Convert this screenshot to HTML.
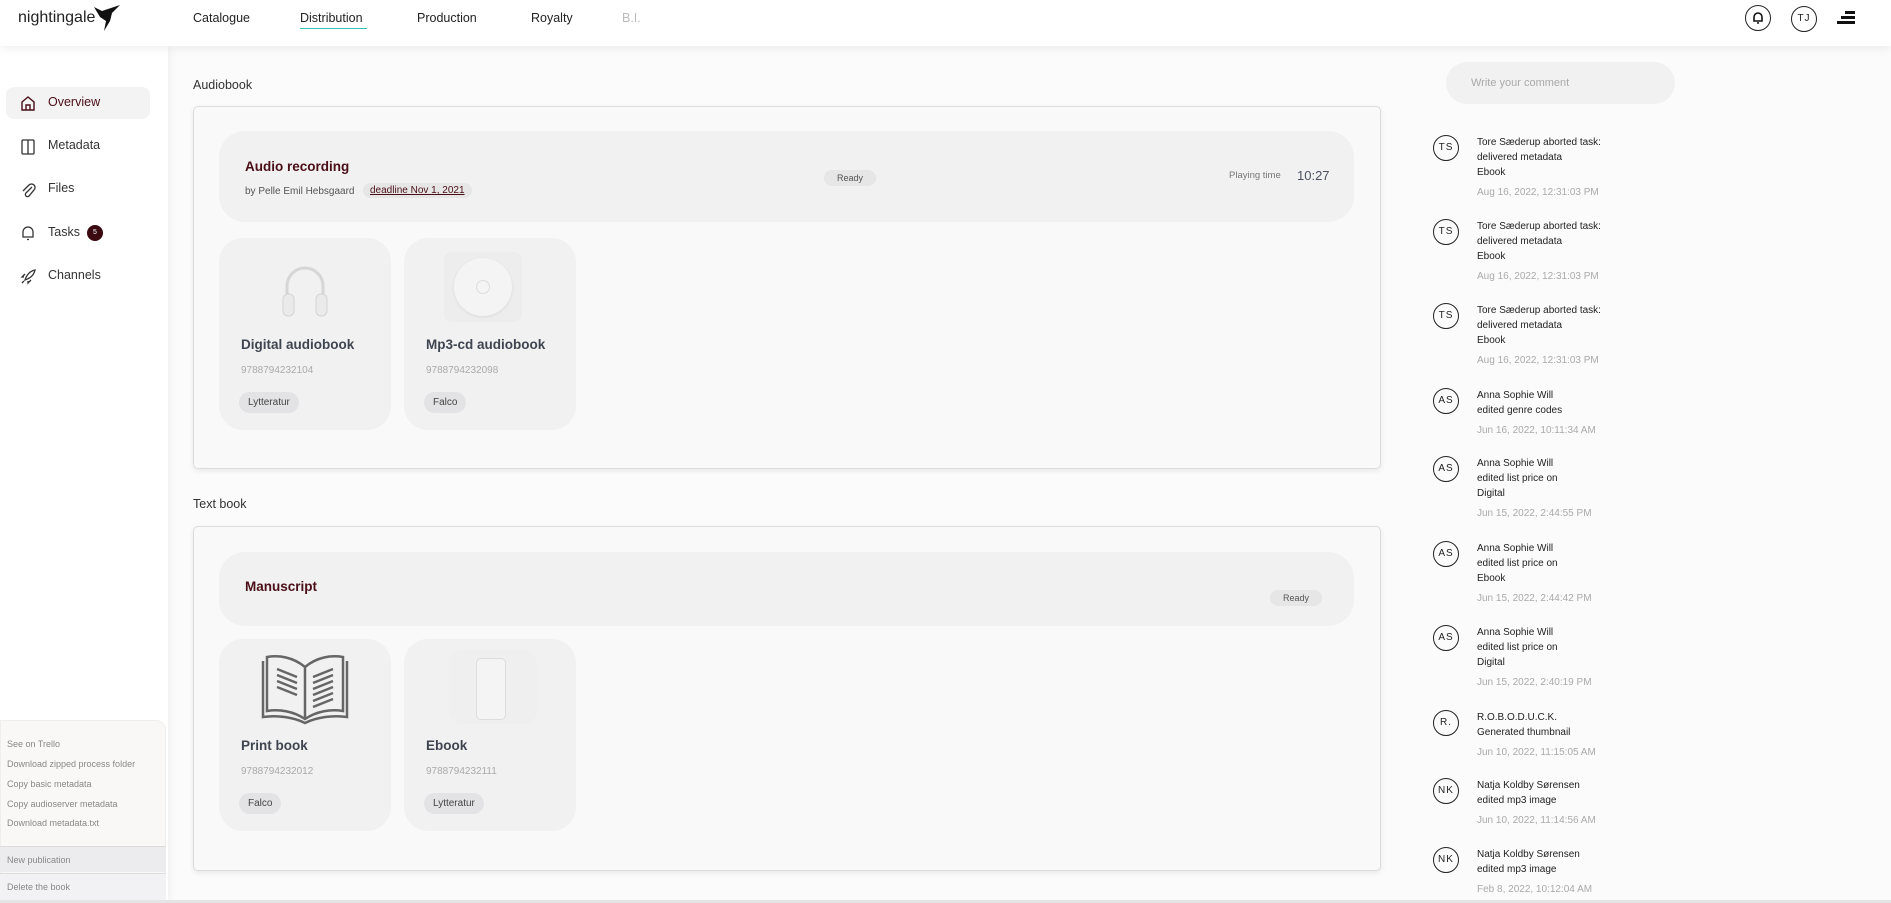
<!DOCTYPE html>
<html><head><meta charset="utf-8"><style>
*{box-sizing:border-box;margin:0;padding:0}
body{width:1891px;height:903px;position:relative;overflow:hidden;background:#fbfbfb;font-family:"Liberation Sans",sans-serif;color:#222}
.a{position:absolute}
.hdr{left:0;top:0;width:1891px;height:46px;background:#fff;box-shadow:0 2px 10px rgba(0,0,0,.07);z-index:3}
.nav{top:11px;font-size:12.5px;color:#222}
.side{left:0;top:46px;width:168px;height:857px;background:#fff;box-shadow:2px 0 8px rgba(0,0,0,.05)}
.si{left:48px;font-size:12.5px;color:#333}
.ic{left:19px;width:18px;height:18px}
.card{background:#f9f9f9;border:1px solid #dcdcdc;border-radius:5px;box-shadow:0 2px 6px rgba(0,0,0,.08)}
.panel{background:#f1f1f1;border-radius:26px}
.prod{background:#f1f1f1;border-radius:24px;width:172px;height:192px}
.pt{font-size:13.5px;font-weight:bold;color:#3f4550;position:absolute;left:22px}
.isbn{font-size:10px;color:#aaa;position:absolute;left:22px}
.pill{position:absolute;left:20px;background:#e3e3e5;border-radius:12px;font-size:10px;color:#444;padding:5px 9px}
.rdy{background:#e6e6e6;border-radius:9px;font-size:9px;color:#555;padding:3px 13px}
.av{width:26px;height:26px;border:1.3px solid #222;border-radius:50%;font-size:10px;text-align:center;line-height:24px;letter-spacing:1px;color:#222}
.ent{left:1477px;font-size:10px;line-height:15px;color:#222}
.ent .d{color:#aaa;margin-top:5px}
.bm{left:7px;font-size:9px;color:#888}
</style></head><body>
<div class="a hdr">
 <div class="a" style="left:18px;top:9px;font-size:16px;color:#222">nightingale</div>
 <svg class="a" style="left:92px;top:3px" width="30" height="30" viewBox="0 0 30 30"><path d="M2 4 L10 8 L16 6 L28 2 L20 10 L18 18 L12 28 L14 18 L8 14 Z" fill="#111"/></svg>
 <div class="a nav" style="left:193px">Catalogue</div>
 <div class="a nav" style="left:300px">Distribution</div>
 <div class="a" style="left:300px;top:28px;width:67px;height:1px;background:#2ec4b6"></div>
 <div class="a nav" style="left:417px">Production</div>
 <div class="a nav" style="left:531px">Royalty</div>
 <div class="a nav" style="left:622px;color:#bbb">B.I.</div>
 <div class="a av" style="left:1745px;top:5px;line-height:22px"><svg width="14" height="14" viewBox="0 0 14 14" style="margin-top:5px"><path d="M3 10 V6 a4 4 0 0 1 8 0 V10 H3 Z M6 12 h2" fill="none" stroke="#111" stroke-width="1.6"/></svg></div>
 <div class="a av" style="left:1791px;top:6px">TJ</div>
 <div class="a" style="left:1845px;top:11px;width:10px;height:3px;background:#111"></div>
 <div class="a" style="left:1841px;top:16px;width:14px;height:3px;background:#111"></div>
 <div class="a" style="left:1837px;top:21px;width:18px;height:3px;background:#111"></div>
</div>
<div class="a side">
 <div class="a" style="left:6px;top:41px;width:144px;height:32px;background:#f3f3f3;border-radius:8px"></div>
 <svg class="a ic" style="top:48px" viewBox="0 0 18 18"><path d="M3 8 L9 3 L15 8 V16 H3 Z M7 16 V11 H11 V16" fill="none" stroke="#4a0e16" stroke-width="1.4"/></svg>
 <div class="a si" style="top:49px;color:#4a0e16">Overview</div>
 <svg class="a ic" style="top:92px" viewBox="0 0 18 18"><rect x="3" y="2" width="12" height="14" rx="1" fill="none" stroke="#333" stroke-width="1.3"/><path d="M9 2V16" stroke="#333" stroke-width="1.3"/></svg>
 <div class="a si" style="top:92px">Metadata</div>
 <svg class="a ic" style="top:135px" viewBox="0 0 18 18"><path d="M13 6 L7 12 a2 2 0 0 0 3 3 L15 9 a3.5 3.5 0 0 0 -5 -5 L4 10" fill="none" stroke="#333" stroke-width="1.3"/></svg>
 <div class="a si" style="top:135px">Files</div>
 <svg class="a ic" style="top:178px" viewBox="0 0 18 18"><path d="M4 13 V8 a5 5 0 0 1 10 0 V13 H4 Z M8 15.5 h2" fill="none" stroke="#333" stroke-width="1.3"/></svg>
 <div class="a si" style="top:179px">Tasks</div>
 <div class="a" style="left:87px;top:179px;width:16px;height:16px;border-radius:50%;background:#3a0a10;color:#fff;font-size:7px;text-align:center;line-height:16px">5</div>
 <svg class="a ic" style="top:222px" viewBox="0 0 18 18"><path d="M5 13 L3 15 M6 12 C8 6 11 3 16 2 C15 7 12 10 6 12 Z M5 9 L3 9 L6 6 M9 13 V15 L12 12" fill="none" stroke="#333" stroke-width="1.3"/></svg>
 <div class="a si" style="top:222px">Channels</div>
 <div class="a" style="left:0;top:674px;width:166px;height:176px;background:#faf8f6;border:1px solid #eee;border-radius:0 10px 0 0"></div>
 <div class="a bm" style="top:693px">See on Trello</div>
 <div class="a bm" style="top:713px">Download zipped process folder</div>
 <div class="a bm" style="top:733px">Copy basic metadata</div>
 <div class="a bm" style="top:753px">Copy audioserver metadata</div>
 <div class="a bm" style="top:772px">Download metadata.txt</div>
 <div class="a" style="left:0;top:800px;width:166px;height:26px;background:#ececee;border-top:1px solid #ddd"></div>
 <div class="a bm" style="top:809px">New publication</div>
 <div class="a" style="left:0;top:827px;width:166px;height:28px;background:#f2f2f4;border-top:1px solid #ddd"></div>
 <div class="a bm" style="top:836px">Delete the book</div>
</div>
<div class="a" style="left:0;top:900px;width:1891px;height:3px;background:#e4e4e4"></div>

<div class="a" style="left:193px;top:78px;font-size:12.5px;color:#333">Audiobook</div>
<div class="a card" style="left:193px;top:106px;width:1188px;height:363px"></div>
<div class="a panel" style="left:219px;top:131px;width:1135px;height:91px"></div>
<div class="a" style="left:245px;top:159px;font-size:13.5px;font-weight:bold;color:#4a0e16">Audio recording</div>
<div class="a" style="left:245px;top:186px;font-size:10px;color:#555">by Pelle Emil Hebsgaard</div>
<div class="a" style="left:363px;top:183px;background:#e6e6e6;border-radius:9px;padding:2px 7px;font-size:10px;color:#4a0e16;text-decoration:underline">deadline Nov 1, 2021</div>
<div class="a rdy" style="left:824px;top:170px">Ready</div>
<div class="a" style="left:1229px;top:170px;font-size:9.5px;color:#777">Playing time</div>
<div class="a" style="left:1297px;top:168px;font-size:13px;color:#4a5060">10:27</div>

<div class="a prod" style="left:219px;top:238px">
 <svg class="a" style="left:54px;top:18px" width="64" height="64" viewBox="0 0 64 64"><path d="M14 40 V30 a18 18 0 0 1 36 0 V40" fill="none" stroke="#d6d6d6" stroke-width="3"/><rect x="10" y="38" width="11" height="22" rx="5" fill="#eaeaea" stroke="#d4d4d4"/><rect x="43" y="38" width="11" height="22" rx="5" fill="#eaeaea" stroke="#d4d4d4"/></svg>
 <div class="pt" style="top:99px">Digital audiobook</div>
 <div class="isbn" style="top:127px">9788794232104</div>
 <div class="pill" style="top:154px">Lytteratur</div>
</div>
<div class="a prod" style="left:404px;top:238px">
 <div class="a" style="left:40px;top:14px;width:78px;height:70px;background:#ededed;border-radius:8px"></div>
 <div class="a" style="left:50px;top:20px;width:58px;height:58px;border-radius:50%;background:#f4f4f4;box-shadow:0 1px 3px rgba(0,0,0,.08)"></div>
 <div class="a" style="left:72px;top:42px;width:14px;height:14px;border-radius:50%;border:1px solid #ddd"></div>
 <div class="pt" style="top:99px">Mp3-cd audiobook</div>
 <div class="isbn" style="top:127px">9788794232098</div>
 <div class="pill" style="top:154px">Falco</div>
</div>

<div class="a" style="left:193px;top:497px;font-size:12.5px;color:#333">Text book</div>
<div class="a card" style="left:193px;top:526px;width:1188px;height:345px"></div>
<div class="a panel" style="left:219px;top:552px;width:1135px;height:74px"></div>
<div class="a" style="left:245px;top:579px;font-size:13.5px;font-weight:bold;color:#4a0e16">Manuscript</div>
<div class="a rdy" style="left:1270px;top:590px">Ready</div>

<div class="a prod" style="left:219px;top:639px">
 <svg class="a" style="left:40px;top:10px" width="92" height="78" viewBox="0 0 92 78"><g fill="none" stroke="#666" stroke-width="2.5"><path d="M46 18 C34 8 20 6 8 8 V62 C20 60 34 62 46 70 C58 62 72 60 84 62 V8 C72 6 58 8 46 18 V70"/><path d="M4 12 V68 C18 66 34 68 46 74 C58 68 74 66 88 68 V12"/><path d="M18 20 L38 28 M18 26 L38 34 M18 32 L38 40 M18 38 L38 46 M54 28 L74 20 M54 34 L74 26 M54 40 L74 32 M54 46 L74 38 M54 52 L74 44 M54 58 L74 50"/></g></svg>
 <div class="pt" style="top:99px">Print book</div>
 <div class="isbn" style="top:127px">9788794232012</div>
 <div class="pill" style="top:154px">Falco</div>
</div>
<div class="a prod" style="left:404px;top:639px">
 <div class="a" style="left:45px;top:11px;width:88px;height:74px;background:#efefef;border-radius:14px"></div>
 <div class="a" style="left:72px;top:19px;width:30px;height:62px;border:1px solid #ddd;border-radius:5px;background:#f4f4f4"></div>
 <div class="pt" style="top:99px">Ebook</div>
 <div class="isbn" style="top:127px">9788794232111</div>
 <div class="pill" style="top:154px">Lytteratur</div>
</div>

<div class="a" style="left:1446px;top:62px;width:229px;height:42px;background:#f1f1f1;border-radius:21px;padding:15px 25px;font-size:11px;color:#aaa">Write your comment</div>

<div class="a av" style="left:1433px;top:135px">TS</div>
<div class="a ent" style="top:135px">Tore Sæderup aborted task:<br>delivered metadata<br>Ebook<div class="d">Aug 16, 2022, 12:31:03 PM</div></div>
<div class="a av" style="left:1433px;top:219px">TS</div>
<div class="a ent" style="top:219px">Tore Sæderup aborted task:<br>delivered metadata<br>Ebook<div class="d">Aug 16, 2022, 12:31:03 PM</div></div>
<div class="a av" style="left:1433px;top:303px">TS</div>
<div class="a ent" style="top:303px">Tore Sæderup aborted task:<br>delivered metadata<br>Ebook<div class="d">Aug 16, 2022, 12:31:03 PM</div></div>
<div class="a av" style="left:1433px;top:388px">AS</div>
<div class="a ent" style="top:388px">Anna Sophie Will<br>edited genre codes<div class="d">Jun 16, 2022, 10:11:34 AM</div></div>
<div class="a av" style="left:1433px;top:456px">AS</div>
<div class="a ent" style="top:456px">Anna Sophie Will<br>edited list price on<br>Digital<div class="d">Jun 15, 2022, 2:44:55 PM</div></div>
<div class="a av" style="left:1433px;top:541px">AS</div>
<div class="a ent" style="top:541px">Anna Sophie Will<br>edited list price on<br>Ebook<div class="d">Jun 15, 2022, 2:44:42 PM</div></div>
<div class="a av" style="left:1433px;top:625px">AS</div>
<div class="a ent" style="top:625px">Anna Sophie Will<br>edited list price on<br>Digital<div class="d">Jun 15, 2022, 2:40:19 PM</div></div>
<div class="a av" style="left:1433px;top:710px">R.</div>
<div class="a ent" style="top:710px">R.O.B.O.D.U.C.K.<br>Generated thumbnail<div class="d">Jun 10, 2022, 11:15:05 AM</div></div>
<div class="a av" style="left:1433px;top:778px">NK</div>
<div class="a ent" style="top:778px">Natja Koldby Sørensen<br>edited mp3 image<div class="d">Jun 10, 2022, 11:14:56 AM</div></div>
<div class="a av" style="left:1433px;top:847px">NK</div>
<div class="a ent" style="top:847px">Natja Koldby Sørensen<br>edited mp3 image<div class="d">Feb 8, 2022, 10:12:04 AM</div></div>
</body></html>
